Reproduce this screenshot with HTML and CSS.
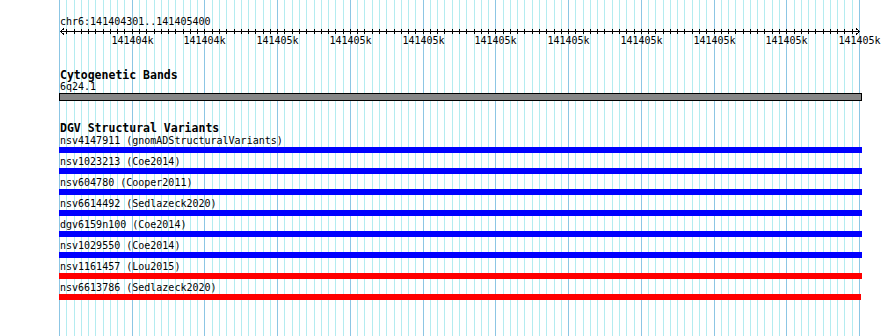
FILE: index.html
```html
<!DOCTYPE html>
<html lang="en">
<head>
  <meta charset="UTF-8" />
  <title>chr6:141404301..141405400</title>
  <link rel="stylesheet" href="styles.css">
</head>
<body>
  <div class="view">
    <svg class="grid" id="grid" width="801" height="336"></svg>

    <div class="tracks">
      <div class="locus">chr6:141404301..141405400</div>
      <svg class="scale" id="scale" width="803" height="22"></svg>

      <div class="track cyto">
        <div class="track-title">Cytogenetic Bands</div>
        <div class="label">6q24.1</div>
        <div class="band"></div>
      </div>

      <div class="track dgv">
        <div class="track-title">DGV Structural Variants</div>
        <div class="variant">
          <div class="label">nsv4147911 (gnomADStructuralVariants)</div>
          <div class="bar gain"></div>
        </div>
        <div class="variant">
          <div class="label">nsv1023213 (Coe2014)</div>
          <div class="bar gain"></div>
        </div>
        <div class="variant">
          <div class="label">nsv604780 (Cooper2011)</div>
          <div class="bar gain"></div>
        </div>
        <div class="variant">
          <div class="label">nsv6614492 (Sedlazeck2020)</div>
          <div class="bar gain"></div>
        </div>
        <div class="variant">
          <div class="label">dgv6159n100 (Coe2014)</div>
          <div class="bar gain"></div>
        </div>
        <div class="variant">
          <div class="label">nsv1029550 (Coe2014)</div>
          <div class="bar gain"></div>
        </div>
        <div class="variant">
          <div class="label">nsv1161457 (Lou2015)</div>
          <div class="bar loss"></div>
        </div>
        <div class="variant">
          <div class="label">nsv6613786 (Sedlazeck2020)</div>
          <div class="bar loss short"></div>
        </div>
      </div>
    </div>
  </div>

  <script>
    const NS = 'http://www.w3.org/2000/svg';
    const grid = document.getElementById('grid');
    const scale = document.getElementById('scale');
    const ticks = 110;   // one tick every 10bp over 1100bp
    const width = 800;

    // tick labels as the browser shows them (rounded to kb)
    const labels = ['141404k', '141404k', '141405k', '141405k', '141405k', '141405k',
                    '141405k', '141405k', '141405k', '141405k', '141405k'];

    const add = (parent, tag, attrs) => {
      const el = document.createElementNS(NS, tag);
      for (const k in attrs) el.setAttribute(k, attrs[k]);
      parent.appendChild(el);
      return el;
    };

    // ruler line with arrow heads
    add(scale, 'path', { d: 'M1 3.5H801 M5 0.5L1.5 3.5L5 6.5 M797 0.5L800.5 3.5L797 6.5', class: 'axis' });

    for (let i = 0; i <= ticks; i++) {
      const x = Math.floor(0.5 + i * width / ticks) + 0.5;
      const major = i % 10 === 0;
      add(grid, 'line', { x1: x, y1: 0, x2: x, y2: 336, class: major ? 'major' : 'minor' });
      if (i > 0 && i < ticks) {
        add(scale, 'line', { x1: x, y1: 1, x2: x, y2: 6, class: 'tick' });
      }
      if (major && i > 0) {
        const t = add(scale, 'text', { x: x, y: 16, class: 'tick-label' });
        t.textContent = labels[i / 10 - 1];
      }
    }
  </script>
</body>
</html>
```

FILE: styles.css
```css
body {
  margin: 0;
  background: #fff;
  font-family: "DejaVu Sans Mono", monospace;
  font-size: 10px;
  color: #000;
}

.view {
  position: relative;
  margin-left: 59px;
  width: 803px;
  height: 336px;
}

.grid {
  position: absolute;
  top: 0;
  left: 0;
}

.grid .minor {
  stroke: #b4ecf0;
  stroke-width: 1;
}

.grid .major {
  stroke: #8cc6e4;
  stroke-width: 1;
}

.tracks {
  position: relative;
}

.locus {
  padding: 15px 0 0 1px;
  line-height: 13px;
}

.scale {
  display: block;
  overflow: visible;
}

.scale .axis,
.scale .tick {
  stroke: #000;
  stroke-width: 1;
  fill: none;
  shape-rendering: crispEdges;
}

.scale .tick-label {
  font-family: "DejaVu Sans Mono", monospace;
  font-size: 10px;
  text-anchor: middle;
  fill: #000;
}

.track-title {
  padding-left: 1px;
  font-size: 11.5px;
  font-weight: bold;
  line-height: 12px;
}

.label {
  padding-left: 1px;
  line-height: 12px;
  white-space: nowrap;
}

.cyto {
  margin-top: 19px;
}

.band {
  height: 6px;
  border: 1px solid #000;
  background: #878787;
}

.dgv {
  margin-top: 21px;
}

.variant .label {
  line-height: 13px;
}

.bar {
  height: 6px;
  margin-bottom: 2px;
}

.bar.gain {
  background: #0000ff;
}

.bar.loss {
  background: #ff0000;
}

.bar.short {
  width: 802px;
}
```
